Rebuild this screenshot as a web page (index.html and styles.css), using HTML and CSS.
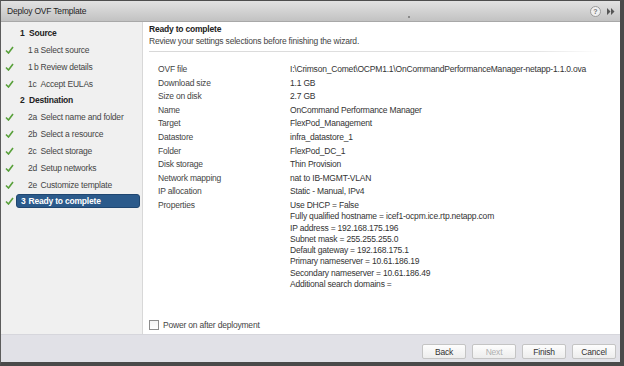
FILE: index.html
```html
<!doctype html>
<html lang="en">
  <head>
    <meta charset="UTF-8" />
    <title>Deploy OVF Template</title>
    <link rel="stylesheet" href="styles.css">
  </head>
  <body>
    <div class="window">
      <div class="titlebar">
        <span class="title">Deploy OVF Template</span>
        <span class="grip"></span>
        <span class="help">?</span>
        <svg class="expand" viewBox="0 0 8 7" width="8" height="7">
          <path d="M0 0 L3.5 3.5 L0 7 Z M4 0 L7.5 3.5 L4 7 Z" fill="#555" />
        </svg>
      </div>

      <div class="main">
        <div class="sidebar">
          <div class="group"><span class="gnum">1</span>Source</div>
          <div class="step">
            <svg class="check" viewBox="0 0 9 8"><path d="M1 4.5 L3.5 7 L8 1" /></svg>
            <span class="num">1&#8201;a</span><span class="label">Select source</span>
          </div>
          <div class="step">
            <svg class="check" viewBox="0 0 9 8"><path d="M1 4.5 L3.5 7 L8 1" /></svg>
            <span class="num">1&#8201;b</span><span class="label">Review details</span>
          </div>
          <div class="step">
            <svg class="check" viewBox="0 0 9 8"><path d="M1 4.5 L3.5 7 L8 1" /></svg>
            <span class="num">1c</span><span class="label">Accept EULAs</span>
          </div>
          <div class="group"><span class="gnum">2</span>Destination</div>
          <div class="step">
            <svg class="check" viewBox="0 0 9 8"><path d="M1 4.5 L3.5 7 L8 1" /></svg>
            <span class="num">2a</span><span class="label">Select name and folder</span>
          </div>
          <div class="step">
            <svg class="check" viewBox="0 0 9 8"><path d="M1 4.5 L3.5 7 L8 1" /></svg>
            <span class="num">2b</span><span class="label">Select a resource</span>
          </div>
          <div class="step">
            <svg class="check" viewBox="0 0 9 8"><path d="M1 4.5 L3.5 7 L8 1" /></svg>
            <span class="num">2c</span><span class="label">Select storage</span>
          </div>
          <div class="step">
            <svg class="check" viewBox="0 0 9 8"><path d="M1 4.5 L3.5 7 L8 1" /></svg>
            <span class="num">2d</span><span class="label">Setup networks</span>
          </div>
          <div class="step">
            <svg class="check" viewBox="0 0 9 8"><path d="M1 4.5 L3.5 7 L8 1" /></svg>
            <span class="num">2e</span><span class="label">Customize template</span>
          </div>
          <div class="step">
            <svg class="check" viewBox="0 0 9 8"><path d="M1 4.5 L3.5 7 L8 1" /></svg>
            <span class="current"><span class="cnum">3</span>Ready to complete</span>
          </div>
        </div>

        <div class="content">
          <div class="page-head">
            <div class="page-title">Ready to complete</div>
            <div class="page-sub">Review your settings selections before finishing the wizard.</div>
          </div>

          <div class="details">
            <div class="row"><span class="key">OVF file</span><span class="val">I:\Crimson_Comet\OCPM1.1\OnCommandPerformanceManager-netapp-1.1.0.ova</span></div>
            <div class="row"><span class="key">Download size</span><span class="val">1.1 GB</span></div>
            <div class="row"><span class="key">Size on disk</span><span class="val">2.7 GB</span></div>
            <div class="row"><span class="key">Name</span><span class="val">OnCommand Performance Manager</span></div>
            <div class="row"><span class="key">Target</span><span class="val">FlexPod_Management</span></div>
            <div class="row"><span class="key">Datastore</span><span class="val">infra_datastore_1</span></div>
            <div class="row"><span class="key">Folder</span><span class="val">FlexPod_DC_1</span></div>
            <div class="row"><span class="key">Disk storage</span><span class="val">Thin Provision</span></div>
            <div class="row"><span class="key">Network mapping</span><span class="val">nat to IB-MGMT-VLAN</span></div>
            <div class="row"><span class="key">IP allocation</span><span class="val">Static - Manual, IPv4</span></div>
            <div class="row props">
              <span class="key">Properties</span>
              <span class="val">
                <span class="line">Use DHCP = False</span>
                <span class="line">Fully qualified hostname = icef1-ocpm.ice.rtp.netapp.com</span>
                <span class="line">IP address = 192.168.175.196</span>
                <span class="line">Subnet mask = 255.255.255.0</span>
                <span class="line">Default gateway = 192.168.175.1</span>
                <span class="line">Primary nameserver = 10.61.186.19</span>
                <span class="line">Secondary nameserver = 10.61.186.49</span>
                <span class="line">Additional search domains =</span>
              </span>
            </div>
          </div>

          <label class="power"><span class="box"></span>Power on after deployment</label>
        </div>
      </div>

      <div class="footer">
        <button class="btn">Back</button>
        <button class="btn" disabled>Next</button>
        <button class="btn">Finish</button>
        <button class="btn">Cancel</button>
      </div>
    </div>
  </body>
</html>
```

FILE: styles.css
```css
body {
  margin: 0;
  font-family: "Liberation Sans", Arial, sans-serif;
  font-size: 8.5px;
  letter-spacing: -0.2px;
  color: #333;
}

.window {
  width: 624px;
  height: 366px;
  box-sizing: border-box;
  display: flex;
  flex-direction: column;
  border-left: 1px solid #5c5c5c;
  border-top: 1px solid #4e4e4e;
  border-right: 4px solid #4a4a4a;
  border-bottom: 4px solid #4a4a4a;
  background: #fff;
}

/* title bar */
.titlebar {
  height: 21px;
  flex: none;
  display: flex;
  align-items: center;
  padding: 0 5px 0 6px;
  box-sizing: border-box;
  background: linear-gradient(#e2e2e2, #cfcfcf 60%, #c2c2c2);
  border-bottom: 1px solid #a8a8a8;
}

.title {
  color: #1e1e1e;
  font-size: 8.5px;
}

.grip {
  width: 2px;
  height: 2px;
  background: #8a8a8a;
  margin: 12px 0 0 322px;
}

.help {
  margin-left: auto;
  width: 9px;
  height: 9px;
  border: 1px solid #9a9a9a;
  border-radius: 50%;
  background: #f0f0f0;
  color: #777;
  font-size: 7px;
  font-weight: bold;
  line-height: 9px;
  text-align: center;
  letter-spacing: 0;
}

.expand {
  margin-left: 6px;
}

/* body */
.main {
  flex: 1;
  display: flex;
  min-height: 0;
}

.sidebar {
  width: 142px;
  flex: none;
  box-sizing: border-box;
  padding-top: 3px;
  background: #f0f0f0;
  border-right: 1px solid #d8d8d8;
}

.group {
  height: 16.8px;
  line-height: 16.8px;
  padding-left: 19px;
  font-weight: bold;
  color: #222;
}

.gnum {
  display: inline-block;
  width: 9px;
}

.step {
  height: 16.8px;
  display: flex;
  align-items: center;
  padding-left: 4px;
  color: #444;
  white-space: nowrap;
}

.check {
  width: 9px;
  height: 8px;
  flex: none;
  fill: none;
  stroke: #58a03a;
  stroke-width: 1.6;
}

.num {
  flex: none;
  margin-left: 14px;
  width: 12.5px;
}

.current {
  margin-left: 2px;
  width: 124px;
  height: 14px;
  line-height: 12px;
  box-sizing: border-box;
  padding-left: 4px;
  border-radius: 3px;
  background: #2b5a8b;
  border: 1px solid #1f4670;
  color: #fff;
  font-weight: bold;
}

.cnum {
  display: inline-block;
  width: 7.5px;
}

.content {
  flex: 1;
  display: flex;
  flex-direction: column;
  padding: 1px 0 3px 6px;
}

.page-head {
  margin-right: 18px;
  padding-bottom: 4px;
  border-bottom: 1px solid;
  border-image: linear-gradient(90deg, #d8d8d8, #e4e4e4 85%, #fff) 1;
}

.page-title {
  line-height: 12px;
  font-weight: bold;
  color: #222;
}

.page-sub {
  line-height: 12px;
  color: #444;
}

.details {
  margin-top: 11px;
  padding-left: 9px;
}

.row {
  display: flex;
  height: 13.6px;
  line-height: 13.6px;
}

.key {
  width: 132px;
  flex: none;
  color: #444;
}

.val {
  color: #333;
}

.props {
  height: auto;
  margin-top: 1px;
  line-height: 11.3px;
}

.line {
  display: block;
}

.power {
  margin-top: auto;
  display: flex;
  align-items: center;
  height: 12px;
  color: #444;
}

.box {
  width: 8px;
  height: 8px;
  margin-right: 4px;
  border: 1px solid #8c8c8c;
  background: linear-gradient(#f4f4f4, #fff);
}

/* footer */
.footer {
  height: 28px;
  flex: none;
  display: flex;
  justify-content: flex-end;
  align-items: flex-start;
  gap: 6px;
  padding: 9px 4px 0 0;
  box-sizing: border-box;
  background: #e1e1e7;
  border-top: 1px solid #d6d6dc;
}

.btn {
  width: 44px;
  height: 15px;
  padding: 0;
  font-family: inherit;
  font-size: 8.5px;
  letter-spacing: -0.2px;
  color: #333;
  border: 1px solid #c4c4c4;
  border-radius: 2px;
  background: linear-gradient(#fdfdfd, #ededed);
}

.btn:disabled {
  color: #b0b0b0;
}
```
